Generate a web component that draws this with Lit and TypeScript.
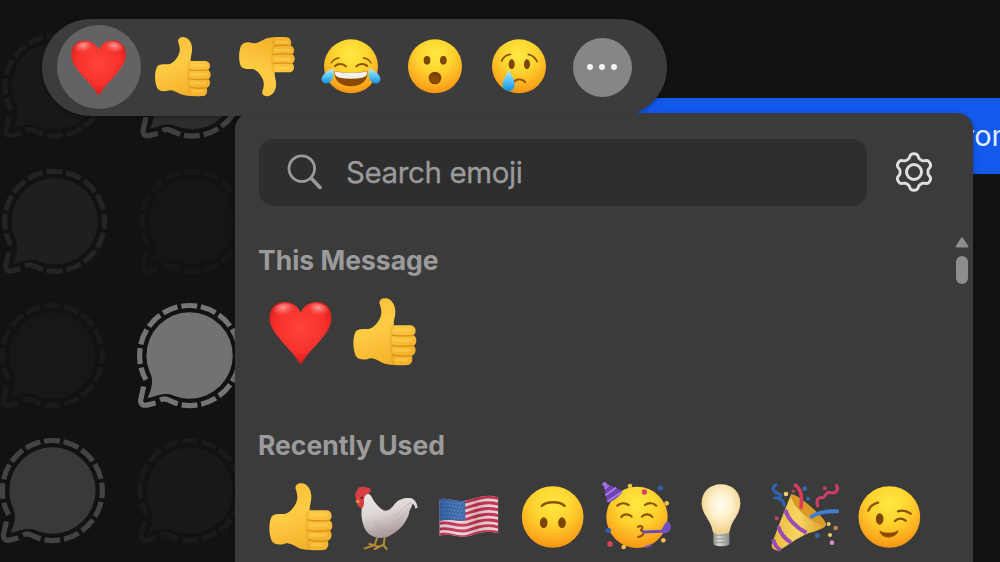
import { LitElement, html, css, svg } from "lit";
import { customElement, property } from "lit/decorators.js";

const thumb = svg`
  <path fill="url(#skin)" d="M138 60C132 45 145 37 158 40C175 44 184 62 184 80C184 95 178 108 179 121L230 121C247 122 249 146 238 151C250 156 250 178 239 182C248 188 247 208 233 212C238 222 234 240 220 240C190 242 160 240 146 234C130 226 118 216 104 221C90 226 72 224 65 212C56 190 56 160 64 142C70 130 90 132 104 132C122 130 142 100 142 84C142 74 141 68 138 60Z"/>
  <g fill="none" stroke-linecap="round" stroke="#cb8210" stroke-width="4" opacity=".7">
    <path d="M174 150C190 154 218 153 238 151M173 181C190 184 218 184 238 182M176 210C192 214 216 214 232 212"/>
    <path opacity=".4" d="M178 123C169 132 168 142 174 150C168 160 168 172 173 181C168 192 170 202 176 210C172 222 174 230 180 237"/>
  </g>
  <path fill="none" stroke="#ffdc68" stroke-width="9" stroke-linecap="round" opacity=".4" d="M184 135H228M182 166H231M182 196H228M186 224H218"/>`;

const tears = svg`
  <path fill="url(#tear)" d="M70 206C56 208 40 220 35 234C33 247 46 254 56 249C70 242 72 222 70 206Z"/>
  <path fill="url(#tear)" d="M177 206C191 208 206 220 211 234C213 247 200 254 190 249C176 242 175 222 177 206Z"/>`;

const glyphs: Record<string, { box: string; art: unknown }> = {
  heart: {
    box: "51 54 204 204",
    art: svg`
      <path fill="url(#red)" d="M152 98C142 74 120 65 100 66C72 68 56 92 59 122C66 166 124 206 146 246Q152 256 158 246C180 206 238 166 244 122C247 92 232 68 204 66C184 65 162 74 152 98Z"/>
      <ellipse cx="100" cy="91" rx="32" ry="21" fill="url(#shine)" transform="rotate(-10 100 91)"/>
      <ellipse cx="204" cy="91" rx="32" ry="21" fill="url(#shine)" transform="rotate(10 204 91)"/>`,
  },
  thumbsUp: { box: "51 39 204 204", art: thumb },
  thumbsDown: { box: "51 39 204 204", art: svg`<g transform="translate(0 280) scale(1 -1)">${thumb}</g>` },
  joy: {
    box: "33 111 180 180",
    art: svg`
      <circle cx="123" cy="199" r="81" fill="url(#face)"/>
      <g fill="none" stroke="#8f5000" stroke-linecap="round">
        <path stroke-width="6" d="M75 198C84 189 99 190 108 199M139 199C148 190 163 189 172 198"/>
        <path stroke-width="4" d="M64 189C69 180 77 175 87 174M160 174C170 175 178 180 183 189"/>
      </g>
      <path fill="#8a4a04" d="M74 213C104 220 142 220 172 213C176 241 153 259 123 259C93 259 70 241 74 213Z"/>
      <path fill="#f4f0ea" d="M75 214C104 220 142 220 171 214C173 225 168 231 157 233C134 237 112 237 89 233C78 231 73 225 75 214Z"/>
      ${tears}`,
  },
  wow: {
    box: "285 111 180 180",
    art: svg`
      <circle cx="375" cy="199" r="81" fill="url(#face)"/>
      <ellipse cx="351" cy="181" rx="10" ry="13" fill="#7c4500"/>
      <ellipse cx="400" cy="181" rx="10" ry="13" fill="#7c4500"/>
      <ellipse cx="375" cy="234" rx="19" ry="19" fill="#794100"/>
      <ellipse cx="375" cy="238" rx="14" ry="12" fill="#8c4c00"/>`,
  },
  cry: {
    box: "537 111 180 180",
    art: svg`
      <circle cx="627" cy="199" r="81" fill="url(#face)"/>
      <ellipse cx="605" cy="193" rx="9" ry="15" fill="#7c4500"/>
      <ellipse cx="651" cy="193" rx="9" ry="15" fill="#7c4500"/>
      <g fill="none" stroke="#8f5000" stroke-width="5.5" stroke-linecap="round">
        <path d="M575 183C580 171 590 164 601 163M655 163C666 165 675 172 681 184"/>
        <path d="M611 247C618 235 637 235 646 247"/>
      </g>
      <path fill="url(#tear)" d="M598 210C590 224 577 238 578 256C579 278 612 278 614 257C615 239 603 225 598 210Z"/>`,
  },
  rooster: {
    box: "303 39 204 204",
    art: svg`
      <g fill="none" stroke="#b98b32" stroke-width="6" stroke-linecap="round" stroke-linejoin="round">
        <path d="M381 204L374 225L344 235M374 226L358 222M404 202L401 224L374 237M400 225L410 237M376 227L388 231"/>
      </g>
      <path fill="url(#feather)" d="M339 76C348 66 360 70 365 81C374 98 386 112 400 121C412 126 424 116 432 104C444 88 462 82 478 84C493 84 501 98 503 113L496 116C495 107 492 103 487 102C484 116 476 122 477 131C470 154 452 180 424 194C402 209 376 206 357 192C343 180 337 160 335 142C333 121 338 100 334 86Z"/>
      <path fill="none" stroke="#a99c98" stroke-width="3" stroke-linecap="round" opacity=".5" d="M434 140C450 128 462 108 482 98M438 154C456 142 466 126 476 114M374 156C388 180 410 188 430 180"/>
      <path fill="#d63f43" d="M317 84C313 70 320 62 324 56C329 47 336 54 339 51C345 48 350 54 354 53C361 52 364 59 361 67C355 72 348 72 344 80C340 88 344 98 341 108C337 119 325 112 321 102Z"/>
      <path fill="#e9a835" d="M325 88L316 96L329 99Z"/>
      <circle cx="335" cy="83" r="3" fill="#3a1512"/>`,
  },
  flag: {
    box: "30 39 204 204",
    art: svg`
      <clipPath id="wave"><path d="M43 88C72 80 92 100 128 91C158 82 184 70 220 82V190C184 178 160 190 132 198C102 206 70 186 43 198Z"/></clipPath>
      <g clip-path="url(#wave)">
        <rect x="40" y="66" width="184" height="140" fill="#e8d3d8"/>
        <g fill="none" stroke="#c4304f" stroke-width="8.7">
          ${[0, 1, 2, 3, 4, 5, 6].map(
            (i) => svg`<path transform="translate(0 ${i * 17.2})" d="M40 92C72 82 92 104 128 95C158 86 184 74 224 86"/>`
          )}
        </g>
        <path fill="#2f62a8" d="M40 80H121V150C98 156 68 145 40 154Z"/>
        <g fill="none" stroke="#7fa3d0" stroke-width="3" stroke-dasharray="3 7">
          <path d="M48 97C70 92 92 104 118 101M52 108C72 103 94 115 116 112M48 119C70 114 92 126 118 123M52 130C72 125 94 137 116 134M48 141C70 136 92 148 118 144"/>
        </g>
        <path fill="url(#fold)" d="M40 66H224V210H40Z"/>
      </g>`,
  },
  upsideDown: {
    box: "282 39 204 204",
    art: svg`
      <circle cx="383" cy="141" r="92.5" fill="url(#face)"/>
      <ellipse cx="356" cy="158" rx="11.5" ry="16" fill="#7c4500"/>
      <ellipse cx="411" cy="158" rx="11.5" ry="16" fill="#7c4500"/>
      <path fill="none" stroke="#8f5000" stroke-width="7" stroke-linecap="round" d="M350 108C364 93 405 93 419 108"/>`,
  },
  party: {
    box: "39 39 204 204",
    art: svg`
      <circle cx="141" cy="142" r="92" fill="url(#face)"/>
      <path fill="#7043b5" d="M40 38L97 62C91 79 73 91 52 99Z"/>
      <path fill="none" stroke="#a578de" stroke-width="6" d="M44 56L56 45M46 76L78 53M53 94L94 67"/>
      <circle cx="44" cy="43" r="7" fill="#a76fe6"/>
      <g fill="none" stroke="#8f5000" stroke-width="6.5" stroke-linecap="round">
        <path d="M82 107C92 98 106 98 116 105M165 105C175 97 190 98 199 107"/>
        <path d="M94 141C101 130 118 131 125 140M156 140C164 130 180 131 187 141"/>
        <path d="M144 170C158 164 162 176 151 181C165 181 164 197 145 201"/>
      </g>
      <path fill="none" stroke="#7049b4" stroke-width="9" stroke-linecap="round" d="M160 186L220 184"/>
      <path fill="#6f50c2" d="M214 180L226 158C234 152 243 158 243 170C243 182 234 190 219 190Z"/>
      <g fill="#f1bd4c"><circle cx="120" cy="48" r="7"/><circle cx="230" cy="100" r="7"/><circle cx="101" cy="231" r="7"/><circle cx="220" cy="211" r="7"/></g>
      <g fill="#d94465"><circle cx="163" cy="66" r="8"/><circle cx="60" cy="222" r="8"/></g>
      <g fill="#315fa9"><circle cx="211" cy="54" r="8"/><circle cx="55" cy="181" r="8"/></g>
      <path fill="#8b5cbf" d="M163 229L182 222L187 226L170 233Z"/>`,
  },
  bulb: {
    box: "291 39 204 204",
    art: svg`
      <path fill="url(#metal)" d="M370 184H418V222C416 231 372 231 370 222Z"/>
      <path fill="none" stroke="#9b9993" stroke-width="3" d="M371 197L417 194M371 208L417 205M372 219L416 216"/>
      <path fill="url(#glass)" d="M393 43C358 43 334 68 335 101C336 130 358 148 365 172C367 180 368 186 371 188C380 192 408 192 417 188C420 184 420 176 424 166C432 146 450 130 451 101C452 68 428 43 393 43Z"/>`,
  },
  popper: {
    box: "48 39 204 204",
    art: svg`
      <path fill="url(#cone)" d="M108 74C122 68 210 142 213 163C215 174 180 183 160 190C128 204 96 226 75 241C62 245 48 235 50 224C65 180 88 124 108 74Z"/>
      <path fill="#d99a28" d="M108 74C104 92 138 132 170 151C194 166 208 168 213 163C213 144 122 66 108 74Z"/>
      <path fill="none" stroke="#994bb6" stroke-width="12" d="M91 119C98 148 126 174 154 188M70 169C76 191 92 208 108 218M55 208C58 222 67 235 77 240"/>
      <path fill="none" stroke="#d93b5a" stroke-width="11" stroke-linecap="round" d="M121 46C138 57 142 82 138 112"/>
      <path fill="none" stroke="#427fd0" stroke-width="12" stroke-linecap="round" d="M170 140C191 126 216 123 246 124"/>
      <path fill="none" stroke="#2f65ad" stroke-width="9" stroke-linecap="round" stroke-linejoin="round" d="M63 44C48 54 54 68 72 71C85 75 74 87 60 84M75 89C88 88 84 102 88 106"/>
      <path fill="none" stroke="#ce3d68" stroke-width="9" stroke-linecap="round" stroke-linejoin="round" d="M244 46C254 60 240 73 226 68C211 61 214 83 202 83C188 80 183 91 188 108"/>
      <g fill="#e6cf65"><circle cx="93" cy="72" r="7"/><circle cx="221" cy="162" r="6"/><circle cx="225" cy="195" r="6"/></g>
      <g fill="#b94469"><circle cx="209" cy="55" r="6"/><circle cx="65" cy="145" r="6"/><circle cx="115" cy="64" r="5"/></g>
      <g fill="#336bb2"><circle cx="149" cy="56" r="7"/><circle cx="159" cy="86" r="6"/><circle cx="187" cy="197" r="7"/></g>
      <circle cx="242" cy="174" r="7" fill="#bd8a4c"/><circle cx="231" cy="218" r="7" fill="#d78bc7"/>`,
  },
  wink: {
    box: "300 39 204 204",
    art: svg`
      <circle cx="403" cy="141" r="92.5" fill="url(#face)"/>
      <ellipse cx="374" cy="147" rx="11.5" ry="17" fill="#7c4500"/>
      <g fill="none" stroke="#8f5000" stroke-width="7" stroke-linecap="round">
        <path d="M340 122C345 109 356 101 369 98M429 124C442 120 456 123 467 131"/>
        <path d="M420 153C429 143 443 144 452 152"/>
      </g>
      <path fill="#8a4b00" d="M375 182C386 190 416 190 427 182C430 180 431 184 429 187C418 207 386 208 375 188C373 184 373 181 375 182Z"/>`,
  },
};

@customElement("emoji-glyph")
export class EmojiGlyph extends LitElement {
  @property() name = "heart";

  static styles = css`
    :host { display: block; width: 60px; height: 60px; flex: none; }
    .art { display: block; width: 100%; height: 100%; overflow: visible; }
  `;

  render() {
    const g = glyphs[this.name];
    return html`<svg class="art" viewBox=${g.box} aria-label=${this.name}>
      <defs>
        <linearGradient id="skin" x1="0" y1="0" x2=".4" y2="1">
          <stop offset="0" stop-color="#f8bd38"/><stop offset=".5" stop-color="#ffcc44"/><stop offset="1" stop-color="#f5b22c"/>
        </linearGradient>
        <radialGradient id="face" cx=".5" cy=".28" r=".74">
          <stop offset="0" stop-color="#ffe941"/><stop offset=".45" stop-color="#fed32f"/><stop offset=".85" stop-color="#fba51b"/><stop offset="1" stop-color="#f0900f"/>
        </radialGradient>
        <radialGradient id="red" cx=".5" cy=".42" r=".62">
          <stop offset="0" stop-color="#ff443c"/><stop offset=".65" stop-color="#f7302b"/><stop offset="1" stop-color="#cf1718"/>
        </radialGradient>
        <radialGradient id="shine" cx=".5" cy=".3" r=".6">
          <stop offset="0" stop-color="#ffc4bc" stop-opacity=".75"/><stop offset=".5" stop-color="#ff9a90" stop-opacity=".4"/><stop offset="1" stop-color="#ff6a60" stop-opacity="0"/>
        </radialGradient>
        <linearGradient id="tear" x1="0" y1="0" x2="0" y2="1">
          <stop offset="0" stop-color="#b8ecff"/><stop offset=".5" stop-color="#58c4fa"/><stop offset="1" stop-color="#1590e0"/>
        </linearGradient>
        <linearGradient id="feather" x1="0" y1="0" x2=".3" y2="1">
          <stop offset="0" stop-color="#efecec"/><stop offset=".5" stop-color="#ddd5d4"/><stop offset="1" stop-color="#a8979a"/>
        </linearGradient>
        <linearGradient id="fold">
          <stop offset="0" stop-color="#000" stop-opacity=".12"/><stop offset=".35" stop-color="#fff" stop-opacity=".08"/><stop offset=".62" stop-color="#400" stop-opacity=".16"/><stop offset="1" stop-color="#fff" stop-opacity="0"/>
        </linearGradient>
        <linearGradient id="metal">
          <stop offset="0" stop-color="#8e8d89"/><stop offset=".35" stop-color="#d8d7d4"/><stop offset="1" stop-color="#898883"/>
        </linearGradient>
        <radialGradient id="glass" cx=".5" cy=".42" r=".56">
          <stop offset="0" stop-color="#fffdf0"/><stop offset=".5" stop-color="#fff0cb"/><stop offset="1" stop-color="#f0d08a"/>
        </radialGradient>
        <linearGradient id="cone">
          <stop offset="0" stop-color="#e8b93c"/><stop offset=".5" stop-color="#f6d561"/><stop offset="1" stop-color="#d99c2a"/>
        </linearGradient>
      </defs>
      ${g.art}
    </svg>`;
  }
}

const wallpaper = [
  { x: 55, y: 86, fill: "#181818", ring: "#1c1c1c" },
  { x: 192, y: 86, fill: "#2d2d2d", ring: "#404040" },
  { x: 54.7, y: 221.3, fill: "#1f1f1f", ring: "#242424" },
  { x: 192, y: 221.3, fill: "#151515", ring: "#171717" },
  { x: 52.4, y: 355.5, fill: "#171717", ring: "#1a1a1a" },
  { x: 189.6, y: 355.5, fill: "#727272", ring: "#757575" },
  { x: 52.4, y: 490.5, fill: "#393939", ring: "#434343" },
  { x: 190, y: 490.5, fill: "#181818", ring: "#1a1a1a" },
];

const gearPath = (() => {
  const pts: string[] = [];
  for (let d = 0; d < 360; d += 3) {
    const a = (d * Math.PI) / 180;
    const r = 16.1 + 2.15 * (Math.tanh(1.6 * Math.cos(6 * a)) / Math.tanh(1.6));
    pts.push(`${(20 + r * Math.sin(a)).toFixed(2)} ${(20 - r * Math.cos(a)).toFixed(2)}`);
  }
  return `M${pts.join("L")}Z`;
})();

@customElement("app-root")
export class AppRoot extends LitElement {
  static styles = css`
    :host { display: block; width: 1000px; height: 562px; overflow: hidden; font-family: Inter, "Liberation Sans", sans-serif; }
    .stage { display: grid; width: 1000px; height: 562px; background: #121212; overflow: hidden; }
    .stage > * { grid-area: 1 / 1; }
    .wallpaper { width: 1000px; height: 562px; }
    .message { box-sizing: border-box; width: 500px; height: 76px; margin: 98px 0 0 600px; padding-left: 353px; background: #1259ec; color: #e6edff; font-size: 29px; line-height: 76px; white-space: nowrap; }
    .bar { display: flex; box-sizing: border-box; width: 625px; height: 97px; margin: 19px 0 0 42px; padding: 6px 22px 7px 15px; border-radius: 49px; background: #3c3c3c; box-shadow: 0 1px 5px rgba(0, 0, 0, .32); }
    .slot { display: flex; align-items: center; justify-content: center; width: 84px; height: 84px; border-radius: 50%; }
    .picked { background: #636363; }
    .more { display: flex; align-items: center; justify-content: center; gap: 6px; width: 59px; height: 59px; margin-right: 2px; border-radius: 50%; background: #868686; }
    .dot { width: 6px; height: 6px; border-radius: 50%; background: #f2f2f2; }
    .panel { display: flex; flex-direction: column; box-sizing: border-box; width: 738px; height: 470px; margin: 113px 0 0 235px; padding: 26px 0 0 24px; border-radius: 16px 16px 0 0; background: #3b3b3b; box-shadow: 0 2px 5px rgba(0, 0, 0, .35); }
    .top { display: flex; align-items: center; gap: 27px; height: 67px; flex: none; }
    .search { display: flex; align-items: center; box-sizing: border-box; width: 608px; height: 67px; padding: 0 0 2px 27px; gap: 22px; border-radius: 15px; background: #2e2e2e; color: #9a9a9a; font-size: 29.5px; letter-spacing: -.4px; -webkit-text-stroke: .3px #9a9a9a; }
    .lens { width: 38px; height: 38px; flex: none; }
    .gear { width: 40px; height: 40px; flex: none; margin-bottom: 2px; }
    .body { display: flex; flex: 1; }
    .list { width: 696px; padding-top: 37px; }
    .title { height: 34px; margin: 0; margin-left: -1px; color: #9b9b9b; font-size: 26.5px; font-weight: 700; letter-spacing: 0; line-height: 34px; white-space: nowrap; }
    .row { display: flex; height: 84px; margin: 13px 0 54px; }
    .row emoji-glyph { width: 68px; height: 68px; }
    .scroll { display: flex; flex-direction: column; gap: 8px; padding-top: 31px; width: 14px; align-items: center; }
    .up { width: 14px; height: 11px; }
    .grip { width: 12.5px; height: 28px; border-radius: 6px; background: #8d8d8d; }
  `;

  private row(title: string, names: string[]) {
    return html`<h2 class="title">${title}</h2>
      <div class="row">
        ${names.map((n) => html`<div class="slot"><emoji-glyph name=${n}></emoji-glyph></div>`)}
      </div>`;
  }

  render() {
    return html`<div class="stage">
      <svg class="wallpaper" viewBox="0 0 1000 562">
        ${wallpaper.map(
          (b) => svg`<g transform="translate(${b.x} ${b.y})">
            <circle r="43.2" fill=${b.fill}/>
            <path fill=${b.fill} d="M-39 18C-36 26 -38 34 -42 42.5C-34 41 -28 37 -18 39L0 0Z"/>
            <g fill="none" stroke=${b.ring} stroke-width="5.2">
              <path stroke-dasharray="15.8 3.83" d="M-7.9 49.4A50 50 0 1 0 -43.8 24.2"/>
              <path stroke-linejoin="round" d="M-46 31L-48.4 42C-50 47 -48 50.5 -43 49.6L-34 47.5M-29.5 44.5C-23 41.5 -20 46 -11.8 48.3"/>
            </g>
          </g>`
        )}
      </svg>
      <div class="message">from</div>
      <div class="bar">
        ${["heart", "thumbsUp", "thumbsDown", "joy", "wow", "cry"].map(
          (n, i) => html`<div class=${i === 0 ? "slot picked" : "slot"}><emoji-glyph name=${n}></emoji-glyph></div>`
        )}
        <div class="slot"><div class="more"><span class="dot"></span><span class="dot"></span><span class="dot"></span></div></div>
      </div>
      <div class="panel">
        <div class="top">
          <div class="search">
            <svg class="lens" viewBox="0 0 38 38" fill="none" stroke="#9a9a9a" stroke-width="2.8">
              <circle cx="15.8" cy="15.6" r="12.8"/><path stroke-width="3.6" stroke-linecap="round" d="M25 25L34 34.4"/>
            </svg>
            <span>Search emoji</span>
          </div>
          <svg class="gear" viewBox="0 0 40 40" fill="none" stroke="#e0e0e0" stroke-width="2.9">
            <path d=${gearPath} stroke-linejoin="round"/><circle cx="20" cy="20" r="7.5"/>
          </svg>
        </div>
        <div class="body">
          <div class="list">
            ${this.row("This Message", ["heart", "thumbsUp"])}
            ${this.row("Recently Used", ["thumbsUp", "rooster", "flag", "upsideDown", "party", "bulb", "popper", "wink"])}
          </div>
          <div class="scroll">
            <svg class="up" viewBox="0 0 14 11"><path fill="#8d8d8d" d="M5.8 1.2Q7 -.3 8.2 1.2L13.2 9Q14 10.6 12.3 10.6H1.7Q0 10.6 .8 9Z"/></svg>
            <div class="grip"></div>
          </div>
        </div>
      </div>
    </div>`;
  }
}
